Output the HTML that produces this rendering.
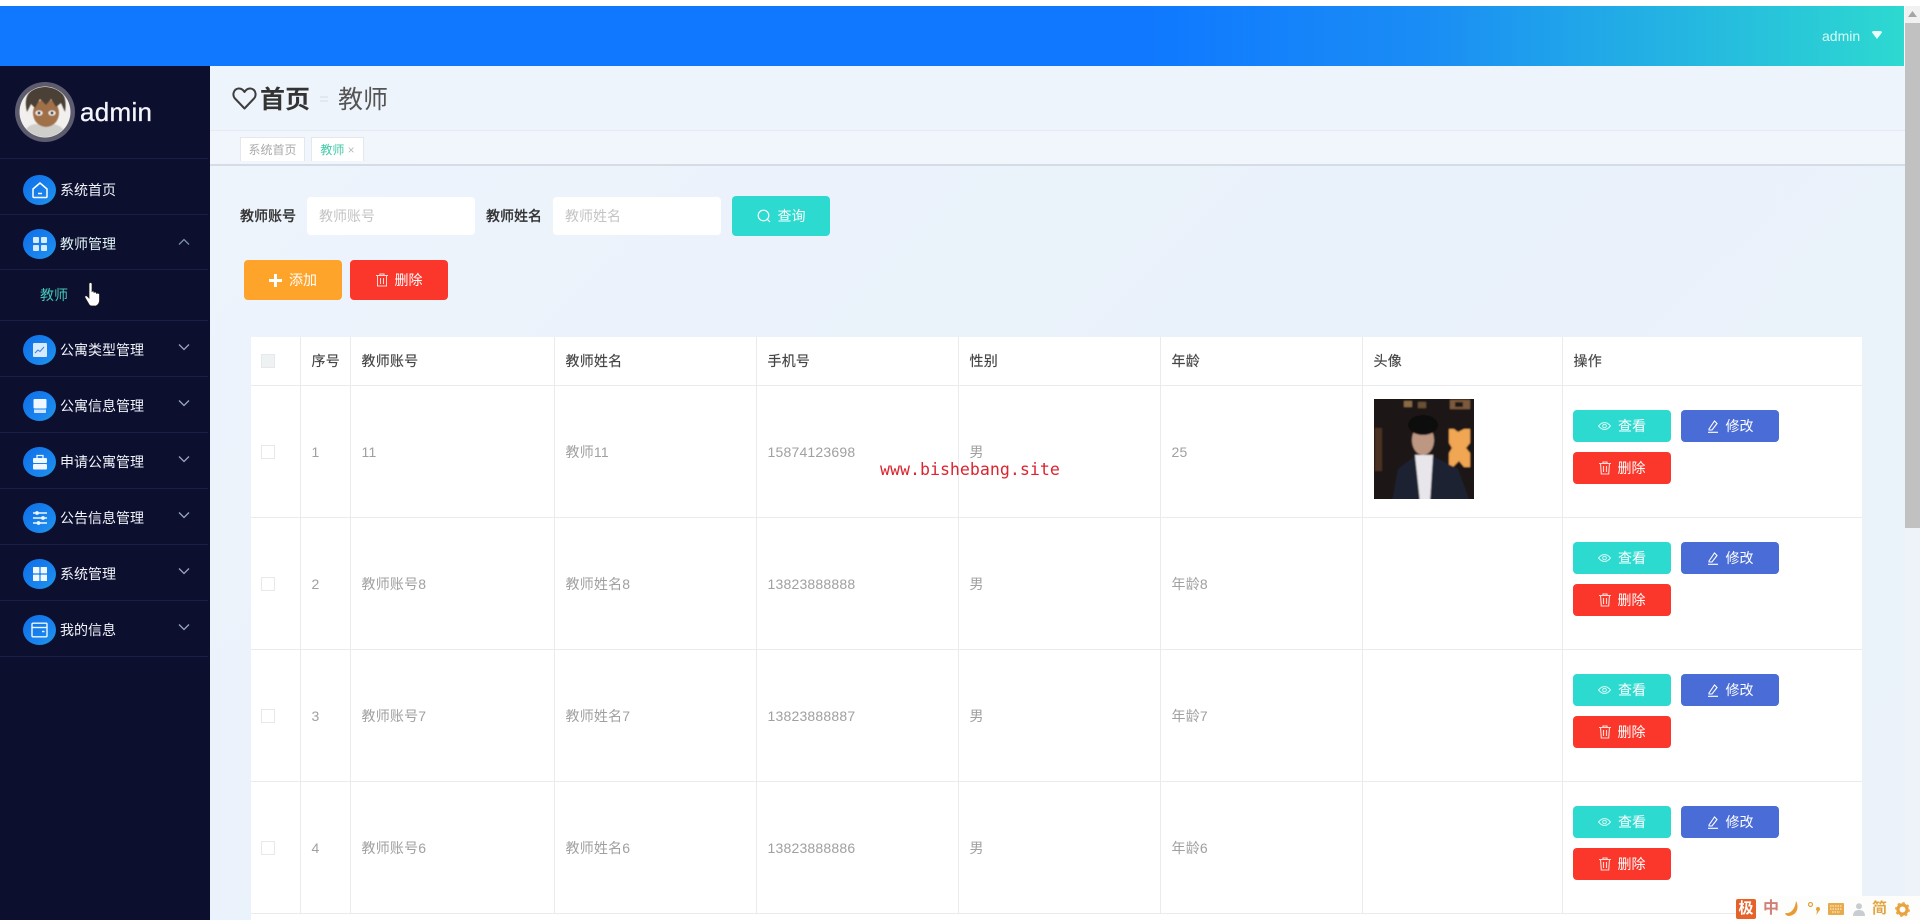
<!DOCTYPE html>
<html lang="zh">
<head>
<meta charset="utf-8">
<title>教师</title>
<style>
*{box-sizing:border-box}
html,body{margin:0;padding:0;width:1920px;height:920px;overflow:hidden;background:#fff}
body{position:relative;font-family:"Liberation Sans","Noto Sans CJK SC",sans-serif;font-size:14px;color:#333;filter:blur(.35px)}
.a{position:absolute}
.top{left:0;top:6px;width:1904px;height:60px;background:linear-gradient(90deg,#0f78ff 0%,#0f78ff 60%,#1a8df5 75%,#2dd9d0 100%)}
.side{left:0;top:66px;width:210px;height:854px;background:#0d0f2f}
.main{left:210px;top:66px;width:1710px;height:854px;background:linear-gradient(135deg,#eef4fc,#e9f1fa 50%,#ebf2fa)}
.sep{left:0;width:208px;height:1px;background:#1b1f47}
.ic{left:23px;width:33px;height:30px;border-radius:50%;background:linear-gradient(135deg,#0f6fe8,#1a86ee 70%,#1a9ce0);display:flex;align-items:center;justify-content:center}
.mt{left:60px;color:#f1f4fa;line-height:20px;white-space:nowrap}
.chev{left:178px}
.title{left:210px;top:66px;width:1695px;height:65px;background:#eef4fc;border-bottom:1px solid #e6ebf3}
.tabs{left:210px;top:131px;width:1695px;height:35px;background:#f1f6fc;border-bottom:2px solid #d6dce5}
.tab{top:137px;height:24px;background:#fff;border:1px solid #e4e8ee;border-bottom:none;font-size:12px;line-height:24px;text-align:center;color:#aaa;white-space:nowrap}
.lbl{top:206px;line-height:20px;font-weight:500;color:#333;white-space:nowrap;-webkit-text-stroke:.2px #333}
.inp{top:197px;width:168px;height:38px;background:#fff;border-radius:4px;color:#c4c4c4;padding-left:12px;line-height:38px;box-shadow:0 0 2px #f0f4fa}
.btn{height:32px;width:98px;border-radius:4px;color:#fff;display:flex;align-items:center;justify-content:center;gap:7px;line-height:1;white-space:nowrap}
.teal{background:#2ddad0}.blue{background:#4a6cd6}.red{background:#fb372b}.org{background:#ffa42a}
.twrap{position:absolute;left:251px;top:337px;width:1611px;height:583px;overflow:hidden;background:#fff}
table{width:1611px;table-layout:fixed;border-collapse:collapse;background:#fff}
td,th{border-right:1px solid #e9ebef;border-bottom:1px solid #e9ebef;padding:0 0 0 11px;text-align:left;color:#a0a0a0;font-weight:400;letter-spacing:.2px;vertical-align:middle}
th{height:48px;color:#444;-webkit-text-stroke:.15px #444}
td{height:132px;padding-top:1px}
td:last-child,th:last-child{border-right:none}
.cb{width:14px;height:14px;border:1px solid #e6e8ec;background:#fff;margin-left:-1px}
th .cb{background:#eef2f2}
.wm{left:880px;top:459px;font-family:"DejaVu Sans Mono","Liberation Mono",monospace;font-size:16.6px;line-height:22px;color:#dc2430;letter-spacing:0;white-space:nowrap}
.sb{left:1905px;top:6px;width:15px;height:914px;background:#eef3f9}
.ime{left:1736px;top:896px;width:184px;height:24px;background:#fdfdfc}
</style>
</head>
<body>
<div class="a main"></div>
<div class="a top"></div>
<div class="a" style="left:1822px;top:27px;color:#d6fbf6;line-height:18px;font-size:14px">admin</div>
<svg class="a" style="left:1872px;top:31px" width="10" height="9"><path d="M0 1.5Q0 0 2 0H8Q10 0 10 1.5L5 8Z" fill="#e8fffb"/></svg>

<div class="a side"></div>
<svg class="a" style="left:15px;top:82px" width="60" height="60" viewBox="0 0 60 60">
<defs><filter id="fa"><feGaussianBlur stdDeviation=".5"/></filter><clipPath id="ca"><circle cx="30" cy="30" r="25"/></clipPath></defs>
<circle cx="30" cy="30" r="30" fill="#5d5b6e"/><circle cx="30" cy="30" r="25.5" fill="#f2f0ee"/>
<g clip-path="url(#ca)" filter="url(#fa)">
<path d="M8 56Q10 42 22 42L38 42Q50 44 52 56Z" fill="#cfcecb"/>
<ellipse cx="31" cy="31" rx="13" ry="14" fill="#a07048"/>
<path d="M12 30Q6 6 30 4Q54 4 50 30L46 21L41 25L36 17L31 23L25 17L20 26L16 22Z" fill="#4b4034"/>
<ellipse cx="24" cy="31" rx="3.6" ry="2.6" fill="#eee"/><ellipse cx="37" cy="31" rx="3.6" ry="2.6" fill="#eee"/>
<circle cx="24" cy="31" r="1.5" fill="#3a2a20"/><circle cx="37" cy="31" r="1.5" fill="#3a2a20"/>
</g></svg>
<div class="a" style="left:80px;top:96px;color:#f5f6fb;font-size:26px;line-height:32px;letter-spacing:.3px;-webkit-text-stroke:.3px #f5f6fb">admin</div>

<div class="a sep" style="top:158px"></div>
<div class="a sep" style="top:214px"></div>
<div class="a sep" style="top:269px"></div>
<div class="a sep" style="top:320px"></div>
<div class="a sep" style="top:376px"></div>
<div class="a sep" style="top:432px"></div>
<div class="a sep" style="top:488px"></div>
<div class="a sep" style="top:544px"></div>
<div class="a sep" style="top:600px"></div>
<div class="a sep" style="top:656px"></div>

<div class="a ic" style="top:175px"><svg width="18" height="18" viewBox="0 0 18 18" fill="none" stroke="#fff" stroke-width="1.5"><path d="M2 8L9 2L16 8V15.5A1 1 0 0 1 15 16.5H3A1 1 0 0 1 2 15.5Z" stroke-linejoin="round"/><path d="M7 12.5H11"/></svg></div>
<div class="a mt" style="top:180px">系统首页</div>

<div class="a ic" style="top:229px"><svg width="16" height="16" viewBox="0 0 16 16" fill="#d9ecff"><rect x="1" y="1" width="6" height="6" rx="1"/><rect x="9" y="1" width="6" height="6" rx="1"/><rect x="1" y="9" width="6" height="6" rx="1"/><rect x="9" y="9" width="6" height="6" rx="1"/></svg></div>
<div class="a mt" style="top:234px;color:#dff5f5">教师管理</div>
<svg class="a chev" style="top:238px" width="12" height="8" fill="none" stroke="#7d8fa8" stroke-width="1.3"><path d="M1 6.5L6 1.5L11 6.5"/></svg>
<div class="a" style="left:40px;top:285px;line-height:20px;color:#45c8b8">教师</div>
<svg class="a" style="left:84px;top:282px" width="18" height="25" viewBox="0 0 18 25"><path d="M5 2Q5 .5 6.5 .5Q8 .5 8 2V9.5Q9 8.5 10 9.5V10.5Q11.5 9.5 12.5 10.8V11.5Q14 10.5 15.5 12V17Q16 22 12 24H8Q5.5 24 4.5 21.5L1 15.5Q.5 13 3 14L5 16Z" fill="#fff" stroke="#1a1a1a" stroke-width=".7"/></svg>

<div class="a ic" style="top:335px"><svg width="16" height="16" viewBox="0 0 16 16"><rect x="1" y="1" width="14" height="14" rx="1" fill="#d8eaff"/><path d="M3 11L6 8L8 9.5L12 5" stroke="#2d80e0" fill="none"/></svg></div>
<div class="a mt" style="top:340px">公寓类型管理</div>
<svg class="a chev" style="top:343px" width="12" height="8" fill="none" stroke="#9aa6bd" stroke-width="1.3"><path d="M1 1.5L6 6.5L11 1.5"/></svg>

<div class="a ic" style="top:391px"><svg width="16" height="16" viewBox="0 0 16 16" fill="#f0f7ff"><rect x="1.5" y="1" width="13" height="9.5" rx="1"/><path d="M2 11.5H14V14.5A.8.8 0 0 1 13 15H3A.8.8 0 0 1 2 14.5Z" fill="#cfe4ff"/></svg></div>
<div class="a mt" style="top:396px">公寓信息管理</div>
<svg class="a chev" style="top:399px" width="12" height="8" fill="none" stroke="#9aa6bd" stroke-width="1.3"><path d="M1 1.5L6 6.5L11 1.5"/></svg>

<div class="a ic" style="top:447px"><svg width="16" height="16" viewBox="0 0 16 16"><path d="M5 4V1.5H11V4" fill="none" stroke="#f0f7ff" stroke-width="1.3"/><rect x="1" y="4" width="14" height="5" rx="1" fill="#f0f7ff"/><rect x="1" y="10" width="14" height="5.5" rx="1" fill="#f0f7ff"/></svg></div>
<div class="a mt" style="top:452px">申请公寓管理</div>
<svg class="a chev" style="top:455px" width="12" height="8" fill="none" stroke="#9aa6bd" stroke-width="1.3"><path d="M1 1.5L6 6.5L11 1.5"/></svg>

<div class="a ic" style="top:503px"><svg width="16" height="16" viewBox="0 0 16 16" stroke="#f0f7ff" stroke-width="1.4" fill="#f0f7ff"><path d="M1 3H15M1 8H15M1 13H15"/><circle cx="5" cy="3" r="1.2"/><circle cx="11" cy="8" r="1.2"/><circle cx="6.5" cy="13" r="1.2"/></svg></div>
<div class="a mt" style="top:508px">公告信息管理</div>
<svg class="a chev" style="top:511px" width="12" height="8" fill="none" stroke="#9aa6bd" stroke-width="1.3"><path d="M1 1.5L6 6.5L11 1.5"/></svg>

<div class="a ic" style="top:559px"><svg width="16" height="16" viewBox="0 0 16 16" fill="#f0f7ff"><rect x="1" y="1" width="6.4" height="6.4" rx=".6"/><rect x="8.6" y="1" width="6.4" height="6.4" rx=".6"/><rect x="1" y="8.6" width="6.4" height="6.4" rx=".6"/><rect x="8.6" y="8.6" width="6.4" height="6.4" rx=".6"/></svg></div>
<div class="a mt" style="top:564px">系统管理</div>
<svg class="a chev" style="top:567px" width="12" height="8" fill="none" stroke="#9aa6bd" stroke-width="1.3"><path d="M1 1.5L6 6.5L11 1.5"/></svg>

<div class="a ic" style="top:615px"><svg width="17" height="16" viewBox="0 0 17 16" fill="none" stroke="#f0f7ff" stroke-width="1.4"><rect x="1" y="1.2" width="15" height="13.6" rx="1"/><path d="M1 5.5H16"/><path d="M11 9.5H13.5"/></svg></div>
<div class="a mt" style="top:620px">我的信息</div>
<svg class="a chev" style="top:623px" width="12" height="8" fill="none" stroke="#9aa6bd" stroke-width="1.3"><path d="M1 1.5L6 6.5L11 1.5"/></svg>

<div class="a title"></div>
<svg class="a" style="left:232px;top:87px" width="25" height="23" viewBox="0 0 25 23" fill="none" stroke="#3d3d3d" stroke-width="2"><path d="M12.5 21.5L3 11.5C0 8 1.5 2 6.5 1.5C9 1.3 11 2.5 12.5 5C14 2.5 16 1.3 18.5 1.5C23.5 2 25 8 22 11.5Z" stroke-linejoin="round"/></svg>
<div class="a" style="left:260px;top:84px;font-size:25px;line-height:32px;font-weight:700;color:#333">首页</div>
<div class="a" style="left:320px;top:96px;width:8px;height:2px;background:#e3e8ee;box-shadow:0 4px 0 #e3e8ee"></div>
<div class="a" style="left:338px;top:84px;font-size:25px;line-height:32px;color:#555">教师</div>

<div class="a tabs"></div>
<div class="a tab" style="left:240px;width:65px">系统首页</div>
<div class="a tab" style="left:311px;width:53px;color:#3fc9a8">教师<span style="color:#bbb"> ×</span></div>

<div class="a lbl" style="left:240px">教师账号</div>
<div class="a inp" style="left:307px">教师账号</div>
<div class="a lbl" style="left:486px">教师姓名</div>
<div class="a inp" style="left:553px">教师姓名</div>
<div class="a btn teal" style="left:732px;top:196px;height:40px"><svg width="14" height="14" viewBox="0 0 14 14" fill="none" stroke="#fff" stroke-width="1.2"><circle cx="6.5" cy="6.5" r="5.3"/><path d="M10.5 10.5L13 13"/></svg>查询</div>
<div class="a btn org" style="left:244px;top:260px;height:40px"><svg width="13" height="13" viewBox="0 0 13 13" fill="#fff"><path d="M5 0H8V5H13V8H8V13H5V8H0V5H5Z"/></svg>添加</div>
<div class="a btn red" style="left:350px;top:260px;height:40px"><svg width="12" height="14" viewBox="0 0 12 14" fill="none" stroke="#ffd8d4" stroke-width="1"><path d="M0 2.5H12M4 2.5V1H8V2.5M1.5 2.5V13H10.5V2.5M4.5 5V11M7.5 5V11"/></svg>删除</div>

<div class="twrap"><table>
<colgroup><col style="width:49px"><col style="width:50px"><col style="width:204px"><col style="width:202px"><col style="width:202px"><col style="width:202px"><col style="width:202px"><col style="width:200px"><col></colgroup>
<tr><th><div class="cb"></div></th><th>序号</th><th>教师账号</th><th>教师姓名</th><th>手机号</th><th>性别</th><th>年龄</th><th>头像</th><th>操作</th></tr>
<tr><td><div class="cb"></div></td><td>1</td><td>11</td><td>教师11</td><td>15874123698</td><td>男</td><td>25</td>
<td><svg width="100" height="100" viewBox="0 0 100 100" style="display:block;position:relative;top:-3px"><defs><filter id="fp"><feGaussianBlur stdDeviation=".9"/></filter></defs><g filter="url(#fp)"><rect x="-3" y="-3" width="106" height="106" fill="#1b1714"/><rect x="1" y="29" width="7" height="43" fill="#4a3222"/><path d="M75 30H80L84 33L90 30H96V44L92 49L96 54V68H90L85 62L79 68H75V54L78 49L75 44Z" fill="#f0a653"/><rect x="76" y="1" width="20" height="9" fill="#7d5a3c"/><rect x="81" y="3" width="8" height="5" fill="#1b1714"/><rect x="30" y="2" width="8" height="6" fill="#8a6a44"/><rect x="44" y="3" width="8" height="6" fill="#6b5036"/><path d="M18 103L24 70L40 58L50 70L60 58L84 70L96 103Z" fill="#1f2133"/><path d="M41 56H59L56 103H46Z" fill="#e8e6ea"/><ellipse cx="49" cy="41" rx="11" ry="15" fill="#bd9782"/><ellipse cx="49" cy="26" rx="15" ry="10" fill="#0e0c0d"/></g></svg></td>
<td style="padding:0"></td></tr>
<tr><td><div class="cb"></div></td><td>2</td><td>教师账号8</td><td>教师姓名8</td><td>13823888888</td><td>男</td><td>年龄8</td><td></td><td style="padding:0"></td></tr>
<tr><td><div class="cb"></div></td><td>3</td><td>教师账号7</td><td>教师姓名7</td><td>13823888887</td><td>男</td><td>年龄7</td><td></td><td style="padding:0"></td></tr>
<tr><td><div class="cb"></div></td><td>4</td><td>教师账号6</td><td>教师姓名6</td><td>13823888886</td><td>男</td><td>年龄6</td><td></td><td style="padding:0"></td></tr>
</table></div>

<div class="a btn teal" style="left:1573px;top:410px"><svg width="13" height="10" viewBox="0 0 13 10" fill="none" stroke="#d5fbf7" stroke-width="1"><path d="M.5 5Q6.5-2 12.5 5Q6.5 12 .5 5Z"/><circle cx="6.5" cy="5" r="1.8"/></svg>查看</div>
<div class="a btn blue" style="left:1681px;top:410px"><svg width="12" height="13" viewBox="0 0 12 13" fill="none" stroke="#fff" stroke-width="1.1"><path d="M1 12.3H11M2 9L7.5 1L10 3.5L5 10H2Z"/></svg>修改</div>
<div class="a btn red" style="left:1573px;top:452px"><svg width="12" height="14" viewBox="0 0 12 14" fill="none" stroke="#ffdcd8" stroke-width="1.1"><path d="M0 2.5H12M4 2.5V1H8V2.5M1.5 2.5L2.3 13H9.7L10.5 2.5M4.5 5V11M7.5 5V11"/></svg>删除</div>

<div class="a btn teal" style="left:1573px;top:542px"><svg width="13" height="10" viewBox="0 0 13 10" fill="none" stroke="#d5fbf7" stroke-width="1"><path d="M.5 5Q6.5-2 12.5 5Q6.5 12 .5 5Z"/><circle cx="6.5" cy="5" r="1.8"/></svg>查看</div>
<div class="a btn blue" style="left:1681px;top:542px"><svg width="12" height="13" viewBox="0 0 12 13" fill="none" stroke="#fff" stroke-width="1.1"><path d="M1 12.3H11M2 9L7.5 1L10 3.5L5 10H2Z"/></svg>修改</div>
<div class="a btn red" style="left:1573px;top:584px"><svg width="12" height="14" viewBox="0 0 12 14" fill="none" stroke="#ffdcd8" stroke-width="1.1"><path d="M0 2.5H12M4 2.5V1H8V2.5M1.5 2.5L2.3 13H9.7L10.5 2.5M4.5 5V11M7.5 5V11"/></svg>删除</div>

<div class="a btn teal" style="left:1573px;top:674px"><svg width="13" height="10" viewBox="0 0 13 10" fill="none" stroke="#d5fbf7" stroke-width="1"><path d="M.5 5Q6.5-2 12.5 5Q6.5 12 .5 5Z"/><circle cx="6.5" cy="5" r="1.8"/></svg>查看</div>
<div class="a btn blue" style="left:1681px;top:674px"><svg width="12" height="13" viewBox="0 0 12 13" fill="none" stroke="#fff" stroke-width="1.1"><path d="M1 12.3H11M2 9L7.5 1L10 3.5L5 10H2Z"/></svg>修改</div>
<div class="a btn red" style="left:1573px;top:716px"><svg width="12" height="14" viewBox="0 0 12 14" fill="none" stroke="#ffdcd8" stroke-width="1.1"><path d="M0 2.5H12M4 2.5V1H8V2.5M1.5 2.5L2.3 13H9.7L10.5 2.5M4.5 5V11M7.5 5V11"/></svg>删除</div>

<div class="a btn teal" style="left:1573px;top:806px"><svg width="13" height="10" viewBox="0 0 13 10" fill="none" stroke="#d5fbf7" stroke-width="1"><path d="M.5 5Q6.5-2 12.5 5Q6.5 12 .5 5Z"/><circle cx="6.5" cy="5" r="1.8"/></svg>查看</div>
<div class="a btn blue" style="left:1681px;top:806px"><svg width="12" height="13" viewBox="0 0 12 13" fill="none" stroke="#fff" stroke-width="1.1"><path d="M1 12.3H11M2 9L7.5 1L10 3.5L5 10H2Z"/></svg>修改</div>
<div class="a btn red" style="left:1573px;top:848px"><svg width="12" height="14" viewBox="0 0 12 14" fill="none" stroke="#ffdcd8" stroke-width="1.1"><path d="M0 2.5H12M4 2.5V1H8V2.5M1.5 2.5L2.3 13H9.7L10.5 2.5M4.5 5V11M7.5 5V11"/></svg>删除</div>

<div class="a wm">www.bishebang.site</div>

<div class="a sb"></div>
<div class="a" style="left:1905px;top:6px;width:15px;height:17px;background:#f1f1f1"></div>
<svg class="a" style="left:1908px;top:11px" width="9" height="6"><path d="M4.5 0L9 6H0Z" fill="#a5a5a5"/></svg>
<div class="a" style="left:1905px;top:23px;width:15px;height:505px;background:#c1c1c1"></div>

<div class="a ime"></div>
<div class="a" style="left:1736px;top:899px;width:20px;height:20px;background:#e5632b;color:#fff;font-size:15px;font-weight:700;line-height:20px;text-align:center;border-radius:2px">极</div>
<div class="a" style="left:1763px;top:899px;color:#d27f78;font-size:16px;font-weight:700;line-height:20px">中</div>
<svg class="a" style="left:1785px;top:901px" width="15" height="16" viewBox="0 0 15 16"><path d="M11 0C14 5 13 14 4 15Q1 15 0 12C5 13 10 9 11 0Z" fill="#ea9a35"/></svg>
<svg class="a" style="left:1808px;top:902px" width="13" height="14" viewBox="0 0 13 14" fill="#e6a23c"><circle cx="2.5" cy="2.5" r="2" fill="none" stroke="#e6a23c" stroke-width="1.2"/><circle cx="10" cy="7" r="2"/><path d="M9 8L11.5 8L8.5 13Z"/></svg>
<svg class="a" style="left:1828px;top:903px" width="16" height="12" viewBox="0 0 16 12"><rect width="16" height="12" rx="1" fill="#e8aa4a"/><path d="M2 3H14M2 6H14M4 9H12" stroke="#fbeacc" stroke-width="1.2" stroke-dasharray="1.5 1"/></svg>
<svg class="a" style="left:1853px;top:903px" width="12" height="13" viewBox="0 0 12 13" fill="#c9cdd2"><circle cx="6" cy="3.2" r="3"/><path d="M0 13Q0 7 6 7Q12 7 12 13Z"/></svg>
<div class="a" style="left:1872px;top:899px;color:#e3a544;font-size:15px;font-weight:700;line-height:20px">简</div>
<svg class="a" style="left:1895px;top:902px" width="15" height="15" viewBox="0 0 15 15" fill="none"><circle cx="7.5" cy="7.5" r="4.6" stroke="#e9a23e" stroke-width="3.2"/><circle cx="7.5" cy="7.5" r="6.8" stroke="#e9a23e" stroke-width="1.2" stroke-dasharray="2.5 2.8"/></svg>
</body>
</html>
